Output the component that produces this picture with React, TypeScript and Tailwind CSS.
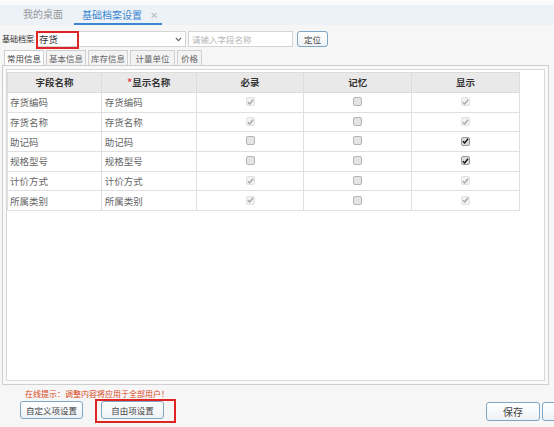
import React from 'react';

const FONT = '"Noto Sans CJK SC", "Liberation Sans", sans-serif';

type Box = 'on' | 'off' | 'lock';

const rows: { code: string; name: string; must: Box; memo: Box; show: Box }[] = [
  { code: '存货编码', name: '存货编码', must: 'lock', memo: 'off', show: 'lock' },
  { code: '存货名称', name: '存货名称', must: 'lock', memo: 'off', show: 'lock' },
  { code: '助记码', name: '助记码', must: 'off', memo: 'off', show: 'on' },
  { code: '规格型号', name: '规格型号', must: 'off', memo: 'off', show: 'on' },
  { code: '计价方式', name: '计价方式', must: 'lock', memo: 'off', show: 'lock' },
  { code: '所属类别', name: '所属类别', must: 'lock', memo: 'off', show: 'lock' },
];

function Check({ state }: { state: Box }) {
  if (state === 'off') {
    return <span className="inline-block h-[9px] w-[9px] rounded-[2px] border border-[#b5b5b5] bg-[#e4e4e4]" />;
  }
  const dark = state === 'on';
  return (
    <span
      className={
        dark
          ? 'inline-flex h-[9px] w-[9px] items-center justify-center rounded-[2px] border border-[#9a9a9a] bg-[#dcdcdc]'
          : 'inline-flex h-[9px] w-[9px] items-center justify-center rounded-[2px] border border-[#e2e2e2] bg-[#f2f2f2]'
      }
    >
      <svg width="8" height="8" viewBox="0 0 8 8">
        <path d="M1 4.2 L3 6.2 L7 1.5" fill="none" stroke={dark ? '#111' : '#a8a8a8'} strokeWidth="1.6" />
      </svg>
    </span>
  );
}

function Btn({ children, className }: { children: React.ReactNode; className: string }) {
  return (
    <div
      className={
        'flex items-center justify-center rounded-[3px] border border-[#7fa6c4] bg-gradient-to-b from-white to-[#eef2f5] text-[8.5px] text-[#444] ' +
        className
      }
    >
      {children}
    </div>
  );
}

export default function App() {
  return (
    <div className="h-[427px] w-[554px] overflow-hidden bg-[#f6f6f6] text-[#333]" style={{ fontFamily: FONT }}>
      {/* page tabs */}
      <div className="h-[5px] bg-[#fbfbfb]" />
      <div className="flex h-[20px] items-end bg-[#edf2f8] pl-[23px] text-[10px]">
        <div className="mb-[4px] text-[#999]">我的桌面</div>
        <div className="ml-[11px] flex h-[20px] w-[88px] items-center border-b-2 border-[#3a86d2] pl-[8px] text-[#3a86d2]">
          基础档案设置
          <span className="ml-[8px] text-[10px] text-[#bbb]">✕</span>
        </div>
      </div>

      {/* filter row */}
      <div className="mt-[6px] flex h-[16px] items-center">
        <span className="w-[36px] whitespace-nowrap pl-[2px] text-[8px] leading-none text-[#333]">基础档案</span>
        <div className="relative flex h-[16px] w-[150px] items-center border border-[#d4d4d4] bg-white pl-[2px] text-[9.5px]">
          存货
          <svg className="absolute right-[3px] top-[5px]" width="7" height="5" viewBox="0 0 7 5">
            <path d="M0.8 0.8 L3.5 3.6 L6.2 0.8" fill="none" stroke="#666" strokeWidth="1.2" />
          </svg>
          <div className="absolute left-[-1px] top-[-1px] h-[18px] w-[43px] border-2 border-[#e02424]" />
        </div>
        <div className="ml-[2px] flex h-[16px] w-[105px] items-center border border-[#d4d4d4] bg-white pl-[3px] text-[8.5px] text-[#b5b5b5]">
          请输入字段名称
        </div>
        <Btn className="ml-[4px] h-[16px] w-[31px]">定位</Btn>
      </div>

      {/* inner tabs */}
      <div className="mt-[2px] flex h-[16px] items-end gap-[2px] pl-[4px] text-[8.5px]">
        {['常用信息', '基本信息', '库存信息', '计量单位', '价格'].map((t, i) => (
          <div
            key={t}
            className={
              'flex h-[15px] items-center justify-center border border-b-0 border-[#cfcfcf] ' +
              (i === 0 ? 'bg-white text-[#444] ' : 'bg-[#f3f3f3] text-[#666] ') +
              (t === '价格' ? 'w-[25px]' : t === '计量单位' ? 'w-[45px]' : 'w-[40px]')
            }
          >
            {t}
          </div>
        ))}
      </div>

      {/* panel */}
      <div className="ml-[2px] h-[320px] w-[547px] border border-[#cfcfcf] bg-[#f9f9f9] p-[3px]">
        <div className="h-full border border-[#d8d8d8] bg-white pt-[2px]">
          <table className="w-[513px] border-collapse text-[9.5px]">
            <colgroup>
              <col className="w-[94px]" />
              <col className="w-[95px]" />
              <col className="w-[108px]" />
              <col className="w-[108px]" />
              <col className="w-[108px]" />
            </colgroup>
            <thead>
              <tr className="h-[20px] bg-[#e9e9e9] text-[9.5px] text-[#333]">
                <th className="border border-[#dcdcdc] font-semibold">字段名称</th>
                <th className="border border-[#dcdcdc] font-semibold">
                  <span className="text-[#e03a3a]">*</span>显示名称
                </th>
                <th className="border border-[#dcdcdc] font-semibold">必录</th>
                <th className="border border-[#dcdcdc] font-semibold">记忆</th>
                <th className="border border-[#dcdcdc] font-semibold">显示</th>
              </tr>
            </thead>
            <tbody>
              {rows.map((r) => (
                <tr key={r.code} className="h-[19.7px] text-[#666]">
                  <td className="border border-[#e0e0e0] pl-[2px]">{r.code}</td>
                  <td className="border border-[#e0e0e0] pl-[3px]">{r.name}</td>
                  <td className="border border-[#e0e0e0] text-center leading-none">
                    <Check state={r.must} />
                  </td>
                  <td className="border border-[#e0e0e0] text-center leading-none">
                    <Check state={r.memo} />
                  </td>
                  <td className="border border-[#e0e0e0] text-center leading-none">
                    <Check state={r.show} />
                  </td>
                </tr>
              ))}
            </tbody>
          </table>
        </div>
      </div>

      {/* footer */}
      <div className="mt-[3px] pl-[25px] text-[8px] leading-[12px] text-[#d9481c]">在线提示：调整内容将应用于全部用户！</div>
      <div className="mt-[1px] flex items-start">
        <Btn className="ml-[20px] h-[18px] w-[63px]">自定义项设置</Btn>
        <div className="relative ml-[18px]">
          <Btn className="h-[18px] w-[63px]">自由项设置</Btn>
          <div className="absolute left-[-6px] top-[-2px] h-[24px] w-[81px] border-2 border-[#e02424]" />
        </div>
        <Btn className="ml-auto mt-[1px] h-[19px] w-[54px] text-[10px]">保存</Btn>
        <Btn className="ml-[2px] mr-[-20px] mt-[1px] h-[19px] w-[32px]">&nbsp;</Btn>
      </div>
    </div>
  );
}
